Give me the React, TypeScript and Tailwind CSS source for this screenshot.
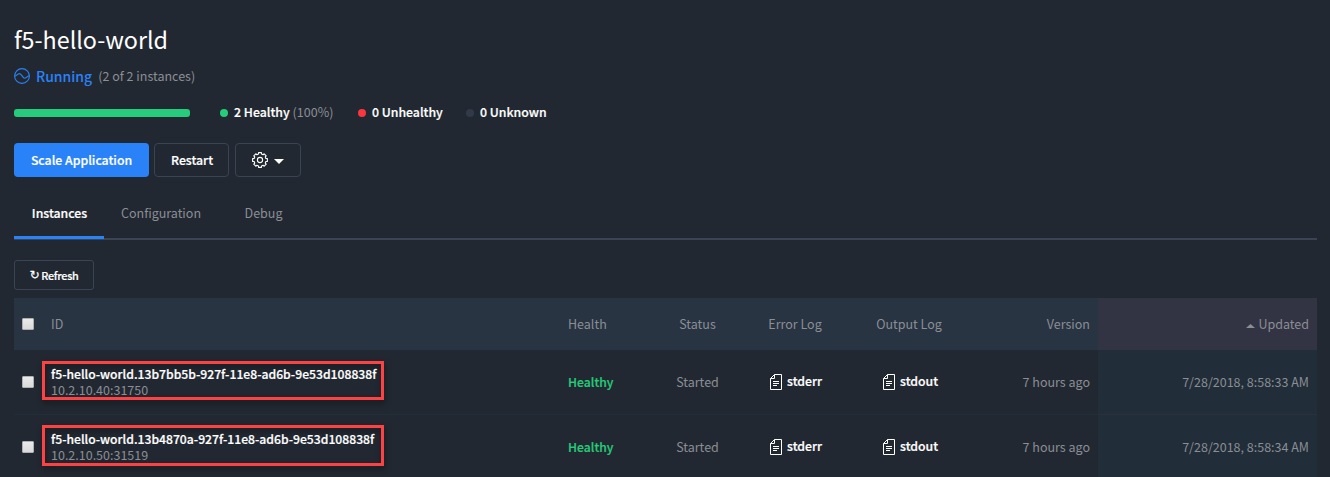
import type { ReactNode } from "react";

const semi = "font-medium [-webkit-text-stroke:0.2px_currentColor]";

function RunningIcon() {
  return (
    <svg className="h-4 w-4 shrink-0" viewBox="0 0 16 16" fill="none" stroke="#2a82f8" strokeWidth="1.1">
      <circle cx="8" cy="8" r="7.4" />
      <path d="M0.8 8.2C2.6 8.2 3.4 5.6 5.4 5.6C8 5.6 8.2 10.2 10.8 10.2C12.8 10.2 13.4 7.8 15.2 7.8" />
    </svg>
  );
}

function GearIcon() {
  const teeth = 8;
  const pts: string[] = [];
  for (let i = 0; i < teeth; i++) {
    const base = (i * 2 * Math.PI) / teeth - Math.PI / 2;
    [[-0.26, 6.1], [-0.19, 7.5], [0.19, 7.5], [0.26, 6.1]].forEach(([a, r]) => {
      pts.push(`${(8 + r * Math.cos(base + a)).toFixed(2)},${(8 + r * Math.sin(base + a)).toFixed(2)}`);
    });
  }
  return (
    <svg className="h-4 w-4" viewBox="0 0 16 16" fill="none" stroke="#fff" strokeWidth="1.1" strokeLinejoin="round">
      <polygon points={pts.join(" ")} />
      <circle cx="8" cy="8" r="2.6" />
    </svg>
  );
}

function FileIcon() {
  return (
    <svg className="h-4 w-3 shrink-0" viewBox="0 0 12 16" fill="none" stroke="#fff" strokeWidth="1">
      <path d="M4.5 0.5H11.5V15.5H0.5V4.5Z" />
      <path d="M4.5 0.5V4.5H0.5" />
      <path d="M3 7.5H9M3 9.5H9M3 11.5H7" />
    </svg>
  );
}

function Checkbox() {
  return (
    <span className="block h-3 w-3 rounded-[1px] border border-[#aeb0b2] bg-linear-to-b from-[#eaeaea] to-[#dadada]" />
  );
}

function Legend({ dot, label, note, className }: { dot: string; label: string; note?: string; className?: string }) {
  return (
    <div className={`flex items-center ${className ?? ""}`}>
      <span className={`mt-[2px] mr-1.5 h-2 w-2 rounded-full ${dot}`} />
      <span className={`${semi} text-[12.3px] text-white`}>{label}</span>
      {note && <span className="ml-[3px]">{note}</span>}
    </div>
  );
}

function LogLink({ children, className }: { children: ReactNode; className: string }) {
  return (
    <div className={`flex h-full items-center border-b border-[#212d39] text-white ${className}`}>
      <FileIcon />
      <span className={`${semi} mb-0.5 ml-[5px] text-[12.3px]`}>{children}</span>
    </div>
  );
}

const grid = "grid grid-cols-[29px_517px_102px_71px_124px_105px_136px_219px]";

const rows = [
  { id: "f5-hello-world.13b7bb5b-927f-11e8-ad6b-9e53d108838f", ip: "10.2.10.40:31750", updated: "7/28/2018, 8:58:33 AM", box: "h-[39px] -top-[5px]" },
  { id: "f5-hello-world.13b4870a-927f-11e8-ad6b-9e53d108838f", ip: "10.2.10.50:31519", updated: "7/28/2018, 8:58:34 AM", box: "h-[41px] -top-[6px]" },
];

export default function App() {
  return (
    <div className="h-[477px] overflow-hidden bg-[#222831] pr-[13px] pl-3.5 font-['Noto_Sans_CJK_SC',sans-serif] text-[12.5px] leading-4 text-[#8a8e95]">
      <h1 className="pt-[23px] text-[23.3px] leading-8 text-white">f5-hello-world</h1>

      <div className="mt-[13px] flex h-4 items-center">
        <RunningIcon />
        <span className="ml-1.5 text-[14px] font-medium text-[#2a82f8]">Running</span>
        <span className="ml-1.5">(2 of 2 instances)</span>
      </div>

      <div className="mt-5 flex h-4 items-center">
        <div className="mt-[2px] h-2 w-44 rounded-[3px] bg-[#26cc7b]" />
        <Legend className="ml-[30px] w-[138px]" dot="bg-[#26cc7b]" label="2 Healthy" note="(100%)" />
        <Legend className="w-[108px]" dot="bg-[#fa363f]" label="0 Unhealthy" />
        <Legend dot="bg-[#323a49]" label="0 Unknown" />
      </div>

      <div className={`mt-[23px] flex h-[34px] text-[12.3px] text-white ${semi}`}>
        <button className="w-[135px] rounded bg-[#2a82f8]">Scale Application</button>
        <button className="ml-[5px] w-[75px] rounded border border-[#3a4454] pl-px">Restart</button>
        <button className="ml-1.5 flex w-[66px] items-center justify-center gap-1.5 rounded border border-[#3a4454]">
          <GearIcon />
          <svg className="mt-0.5 h-[5px] w-2.5" viewBox="0 0 10 5" fill="#fff">
            <path d="M0 0H10L5 5Z" />
          </svg>
        </button>
      </div>

      <div className="mt-[25px] flex h-[38px] border-b-2 border-[#3a4452]">
        <div className={`h-[37px] w-[90px] border-b-3 border-[#2a82f8] pt-[3px] pl-px text-center text-[12.3px] text-white ${semi}`}>
          Instances
        </div>
        <div className="w-[114px] pt-[3px] text-center">Configuration</div>
        <div className="w-[91px] pt-[3px] text-center">Debug</div>
      </div>

      <button className={`mt-5 flex h-[30px] w-20 items-center justify-center rounded-[3px] border border-[#3a4454] text-[10.8px] tracking-[-0.25px] text-white ${semi}`}>
        <span className="mr-0.5 font-['DejaVu_Sans'] text-[12px]">↻</span>Refresh
      </button>

      <div className={`mt-2 ${grid} h-[52px] items-center bg-[#283442]`}>
        <div className="pl-2"><Checkbox /></div>
        <div className="pl-2">ID</div>
        <div className="pl-2">Health</div>
        <div className="text-center">Status</div>
        <div className="text-center">Error Log</div>
        <div className="pr-px text-center">Output Log</div>
        <div className="pr-2 text-right">Version</div>
        <div className="flex h-full items-center justify-end bg-[#323443] pr-2">
          <svg className="mt-1 mr-[3px] h-1 w-[9px]" viewBox="0 0 9 4" fill="#8a8e95">
            <path d="M0 4H9L4.5 0Z" />
          </svg>
          Updated
        </div>
      </div>

      {rows.map((r) => (
        <div key={r.id} className={`${grid} h-[65px] items-center`}>
          <div className="flex h-full items-center border-b border-[#212d39] pl-2"><Checkbox /></div>
          <div className="flex h-full items-center border-b border-[#212d39] pl-2">
            <div className="relative">
              <div className={`absolute -left-[9px] w-[342px] border-3 border-[#fc4242] drop-shadow-[1px_3px_3px_rgba(0,0,0,0.45)] ${r.box}`} />
              <div className={`relative text-[12.18px] text-white ${semi}`}>{r.id}</div>
              <div className="relative">{r.ip}</div>
            </div>
          </div>
          <div className={`flex h-full items-center border-b border-[#212d39] pl-2 text-[12.2px] text-[#26cc7b] ${semi}`}>Healthy</div>
          <div className="flex h-full items-center justify-center border-b border-[#212d39]">Started</div>
          <LogLink className="pl-[37px]">stderr</LogLink>
          <LogLink className="pl-[26px]">stdout</LogLink>
          <div className="flex h-full items-center justify-end border-b border-[#212d39] pr-2">7 hours ago</div>
          <div className="flex h-full items-center justify-end border-b border-[#2a2f3b] bg-[#212d38] pr-2">{r.updated}</div>
        </div>
      ))}
    </div>
  );
}
